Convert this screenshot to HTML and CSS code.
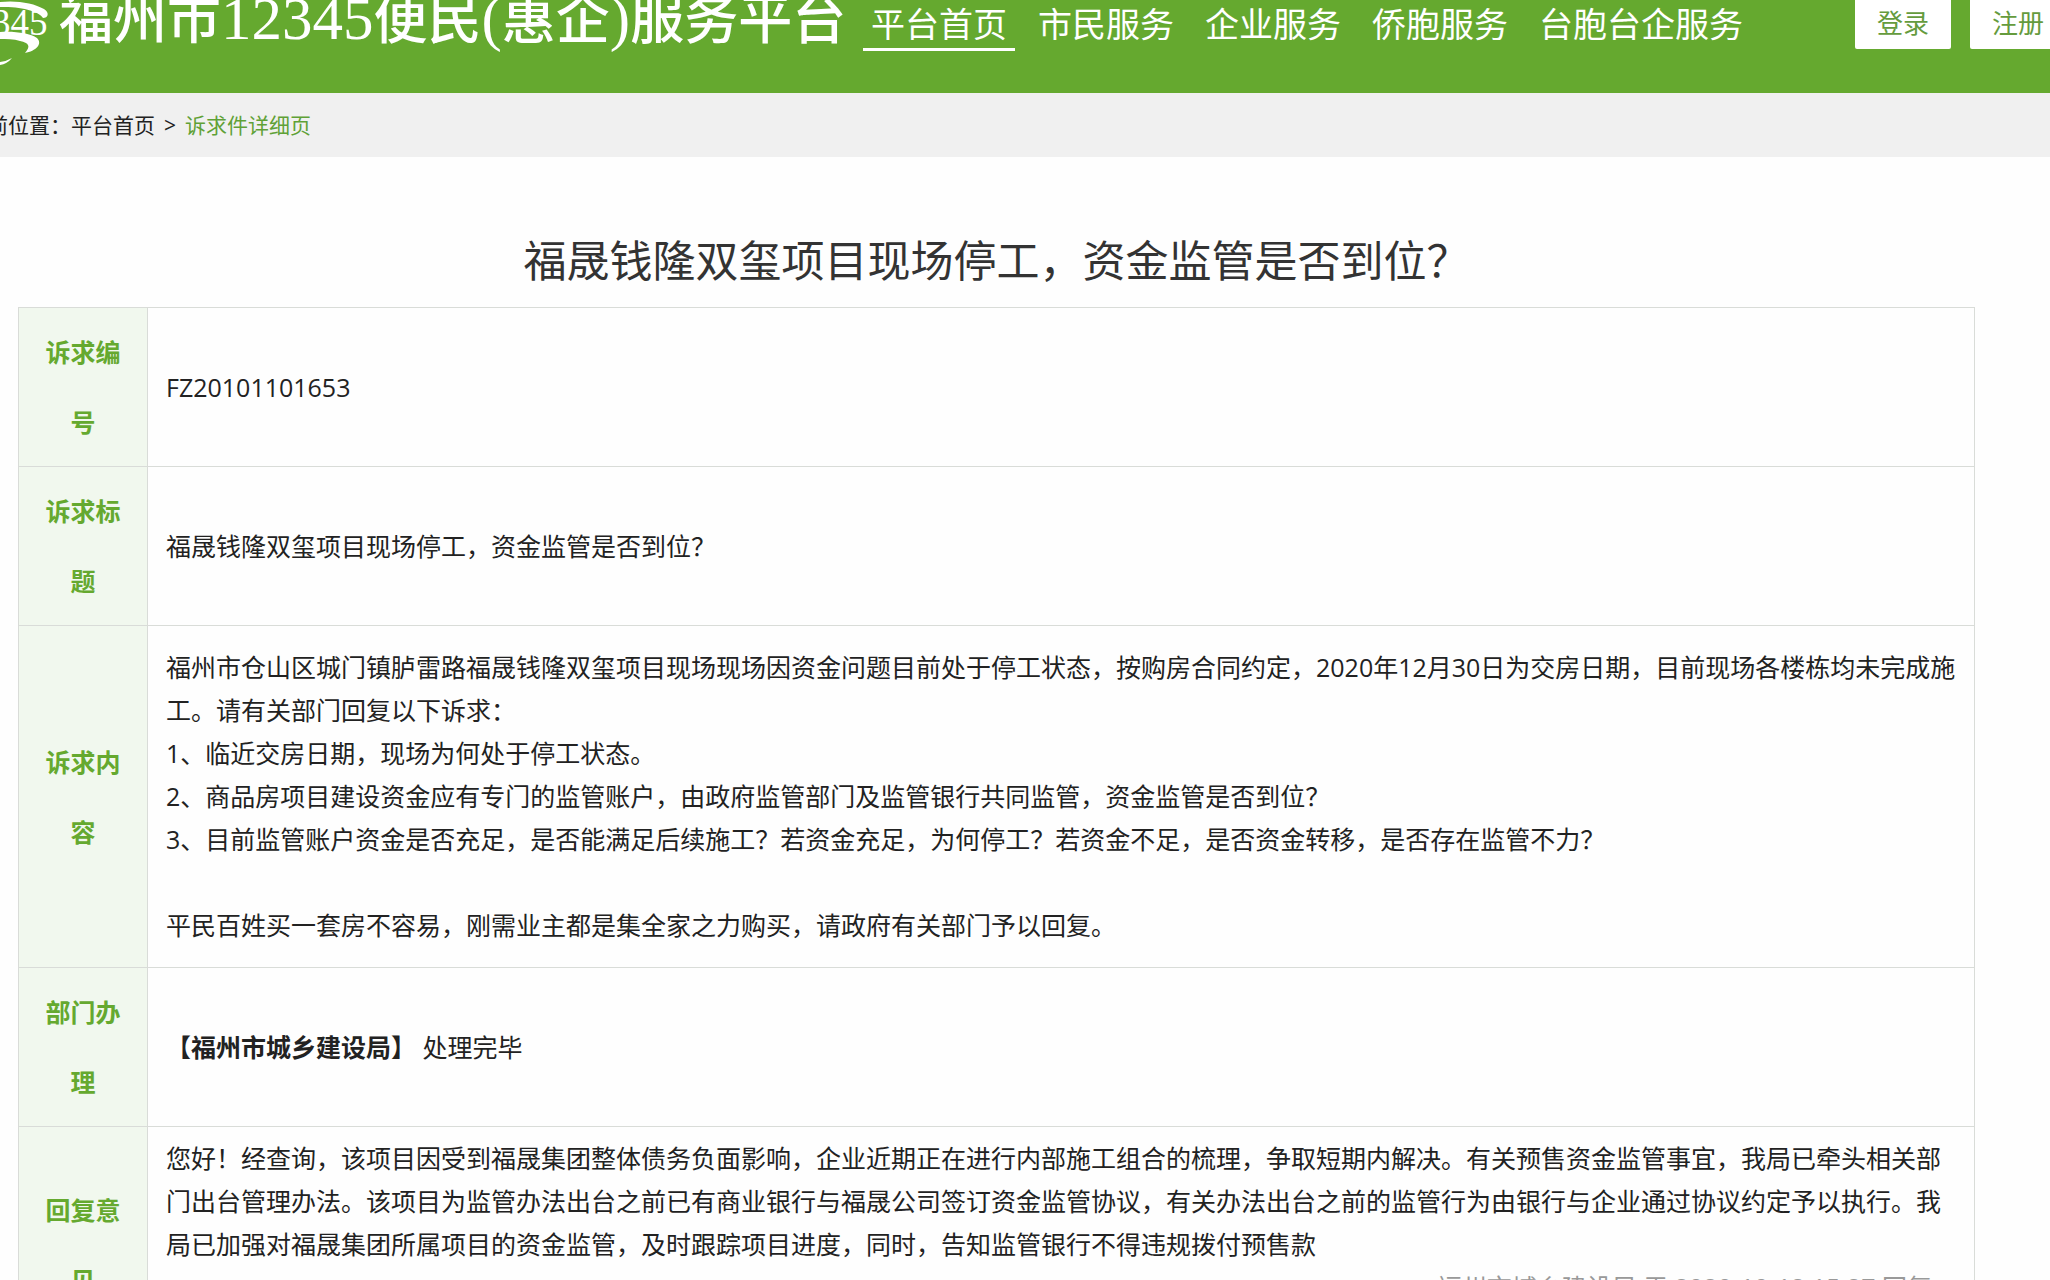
FILE: index.html
```html
<!DOCTYPE html>
<html lang="zh-CN">
<head>
<meta charset="utf-8">
<meta name="viewport" content="width=device-width, initial-scale=1">
<title>诉求件详细页</title>
<link rel="stylesheet" href="styles.css">
</head>
<body>
<header class="header">
  <a class="brand" href="#">
    <svg class="brand-mark" viewBox="0 0 50 68" aria-hidden="true">
      <path d="M0 2C16 0 34 3 44 9C50 13 48 18 43 18C40 12 22 6 0 7Z"/>
      <path d="M0 32C14 31 30 33 37 38C43 44 36 51 25 53C31 46 29 43 20 41C14 39 6 39 0 39Z"/>
      <path d="M0 62Q7 61 12 58Q7 64 0 65Z"/>
      <text x="-8" y="35">345</text>
    </svg>
    <span class="brand-name">福州市<span class="brand-num">12345</span>便民<span class="brand-num">(</span>惠企<span class="brand-num">)</span>服务平台</span>
  </a>
  <nav class="nav">
    <a class="nav-link active" href="#">平台首页</a>
    <a class="nav-link" href="#">市民服务</a>
    <a class="nav-link" href="#">企业服务</a>
    <a class="nav-link" href="#">侨胞服务</a>
    <a class="nav-link" href="#">台胞台企服务</a>
  </nav>
  <div class="account">
    <button class="account-btn" type="button">登录</button>
    <button class="account-btn" type="button">注册</button>
  </div>
</header>
<div class="crumbs">
  <p class="crumbs-text">当前位置：<a href="#">平台首页</a><span class="sep">&gt;</span><a class="current" href="#">诉求件详细页</a></p>
</div>
<main class="main">
  <h1 class="title">福晟钱隆双玺项目现场停工，资金监管是否到位？</h1>
  <table class="detail">
    <tr><th scope="row">诉求编号</th><td>FZ20101101653</td></tr>
    <tr><th scope="row">诉求标题</th><td>福晟钱隆双玺项目现场停工，资金监管是否到位？</td></tr>
    <tr><th scope="row">诉求内容</th><td class="content">福州市仓山区城门镇胪雷路福晟钱隆双玺项目现场现场因资金问题目前处于停工状态，按购房合同约定，2020年12月30日为交房日期，目前现场各楼栋均未完成施工。请有关部门回复以下诉求：<br>1、临近交房日期，现场为何处于停工状态。<br>2、商品房项目建设资金应有专门的监管账户，由政府监管部门及监管银行共同监管，资金监管是否到位？<br>3、目前监管账户资金是否充足，是否能满足后续施工？若资金充足，为何停工？若资金不足，是否资金转移，是否存在监管不力？<br><br>平民百姓买一套房不容易，刚需业主都是集全家之力购买，请政府有关部门予以回复。</td></tr>
    <tr><th scope="row">部门办理</th><td><strong>【福州市城乡建设局】</strong> 处理完毕</td></tr>
    <tr><th scope="row">回复意见</th><td class="reply"><p>您好！经查询，该项目因受到福晟集团整体债务负面影响，企业近期正在进行内部施工组合的梳理，争取短期内解决。有关预售资金监管事宜，我局已牵头相关部门出台管理办法。该项目为监管办法出台之前已有商业银行与福晟公司签订资金监管协议，有关办法出台之前的监管行为由银行与企业通过协议约定予以执行。我局已加强对福晟集团所属项目的资金监管，及时跟踪项目进度，同时，告知监管银行不得违规拨付预售款</p><p class="reply-meta">福州市城乡建设局 于 2020-10-12 15:27 回复</p></td></tr>
  </table>
</main>
</body>
</html>
```
FILE: styles.css
```css
* { box-sizing: border-box; }

body {
  margin: 0;
  background: #fefefe;
  color: #222;
  font-family: "Open Sans", "Noto Sans CJK SC", sans-serif;
  font-size: 25px;
  font-weight: 400;
  line-height: 43px;
  text-spacing-trim: space-all;
  overflow-x: hidden;
}

a { color: inherit; text-decoration: none; }
p { margin: 0; }

.header {
  display: flex;
  align-items: flex-start;
  height: 93px;
  background: #65a92f;
  color: #fff;
  white-space: nowrap;
}

.brand { display: flex; flex: none; width: 863px; }
.brand-mark { flex: none; width: 50px; height: 68px; margin-right: 9px; fill: #fff; }
.brand-mark text { font: 37px "Liberation Serif", serif; }
.brand-name {
  height: 50px;
  font-family: "Liberation Serif", "Noto Sans CJK SC", serif;
  font-size: 54px;
  font-weight: 500;
  line-height: 38px;
}
.brand-num { font-size: 61px; }

.nav { display: flex; flex: none; }
.nav-link {
  height: 51px;
  padding: 0 8px;
  margin-right: 15px;
  font-size: 34px;
  line-height: 48px;
}
.nav-link.active { border-bottom: 3px solid #fff; }

.account { display: flex; flex: none; gap: 19px; margin-left: auto; margin-right: -16px; }
.account-btn {
  width: 96px;
  height: 49px;
  padding: 0 0 2px;
  border: 0;
  border-radius: 0 0 2px 2px;
  background: #fff;
  color: #659b3d;
  font: inherit;
  font-size: 26px;
  line-height: 47px;
}

.crumbs {
  height: 64px;
  background: #f0f0f0;
  font-size: 21px;
  line-height: 64px;
  white-space: nowrap;
}
.crumbs-text { margin-left: -34px; }
.sep { margin: 0 9px; }
.current { color: #5fa136; }

.main { padding: 72px 75px 0 18px; }
.title {
  margin: 0;
  padding-bottom: 14px;
  color: #333;
  font-size: 43px;
  font-weight: 400;
  line-height: 64px;
  text-align: center;
}

.detail { width: 100%; border-collapse: collapse; table-layout: fixed; }
.detail th,
.detail td { border: 1px solid #d9dcd8; vertical-align: middle; }
.detail th {
  width: 129px;
  padding: 9px 20px;
  background: #f1f8ee;
  color: #65a92f;
  font-weight: 700;
  line-height: 70px;
}
.detail td { padding: 9px 14px 9px 18px; }
.detail .content { padding-top: 20px; padding-bottom: 20px; }
.detail .reply { padding-top: 10px; padding-bottom: 53px; }
.reply-meta { padding-right: 28px; color: #999; text-align: right; }
```
